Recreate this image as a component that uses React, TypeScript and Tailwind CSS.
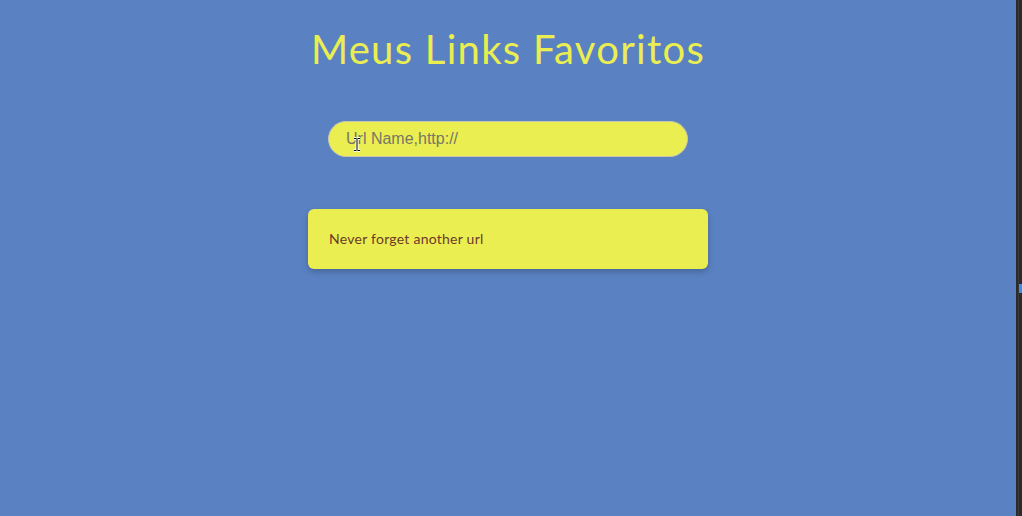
import React from "react";

export default function App() {
  return (
    <div className="flex h-[516px] w-[1022px] overflow-hidden bg-[#5a82c2]">
      <main className="flex flex-1 flex-col items-center">
        <h1
          className="mt-[25px] text-[40px] leading-[48px] text-[#ebee50]"
          style={{ fontFamily: "Lato, 'Noto Sans', sans-serif", letterSpacing: "1.3px" }}
        >
          Meus Links Favoritos
        </h1>
        <div className="relative mt-[48px]">
          <input
            type="text"
            placeholder="Url Name,http://"
            className="h-[36px] w-[360px] rounded-full border border-[#c8c8b0] bg-[#ebee50] px-[17px] text-[16px] text-[#555] outline-none placeholder:text-[#777766]"
            style={{ fontFamily: "'Liberation Sans', Arial, sans-serif" }}
          />
          <svg
            className="absolute left-[25px] top-[16px]"
            width="8"
            height="15"
            viewBox="0 0 8 15"
          >
            <path
              d="M1 1.5h2.5M4.5 1.5H7M4 2v11M1 13.5h2.5M4.5 13.5H7"
              stroke="#fff"
              strokeWidth="3"
              fill="none"
            />
            <path
              d="M1 1.5h2.5M4.5 1.5H7M4 2v11M1 13.5h2.5M4.5 13.5H7"
              stroke="#000"
              strokeWidth="1"
              fill="none"
            />
          </svg>
        </div>
        <div className="mt-[52px] flex h-[60px] w-[400px] items-center rounded-[6px] bg-[#ebee50] px-[21px] pb-[2px] shadow-[0_3px_6px_rgba(0,0,0,0.22)]">
          <span
            className="text-[14px] text-[#6b3a2a]"
            style={{ fontFamily: "Lato, 'Noto Sans', sans-serif", letterSpacing: "0.25px" }}
          >
            Never forget another url
          </span>
        </div>
      </main>
      <div className="relative flex w-[6px]">
        <div className="w-[2px] bg-[#2b2b2b]" />
        <div className="w-[1px] bg-[#3a3a3a]" />
        <div className="w-[3px] bg-[#2b2b2b]" />
        <div className="absolute left-[3px] top-[284px] h-[9px] w-[3px] bg-[#3d8ee0]" />
      </div>
    </div>
  );
}
